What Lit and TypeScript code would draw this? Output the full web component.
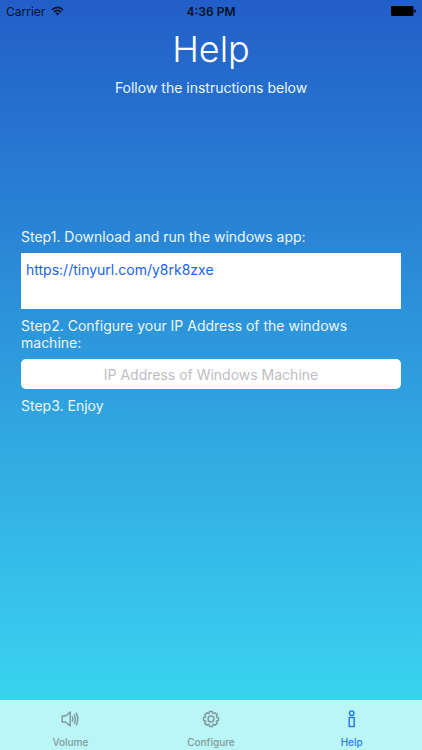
import { LitElement, html, css, svg } from "lit";
import { customElement, state } from "lit/decorators.js";
import { classMap } from "lit/directives/class-map.js";

const gearPath = (() => {
  const points: string[] = [];
  const teeth = 8;
  for (let i = 0; i < teeth; i++) {
    const base = (i / teeth) * Math.PI * 2 - Math.PI / 2;
    const corners: [number, number][] = [[-0.29, 6], [-0.2, 7.6], [0.2, 7.6], [0.29, 6]];
    for (const [offset, radius] of corners) {
      const x = 9 + radius * Math.cos(base + offset);
      const y = 9 + radius * Math.sin(base + offset);
      points.push(`${x.toFixed(2)} ${y.toFixed(2)}`);
    }
  }
  return `M${points.join("L")}Z`;
})();

const icons = {
  volume: svg`<path d="M1.2 6H4.6L9.2 2V16L4.6 12H1.2Z" />
    <path d="M11 6.4Q12.8 9 11 11.6M13 4.4Q15.8 9 13 13.6M15 2.6Q18.6 9 15 15.4" />`,
  configure: svg`<path d=${gearPath} /><circle cx="9" cy="9" r="2.9" />`,
  help: svg`<circle cx="8.7" cy="3.3" r="2.2" /><path d="M6.2 7.5H11.2V16.4H6.2Z" />`,
};

const tabs = [
  { id: "volume", label: "Volume", icon: icons.volume },
  { id: "configure", label: "Configure", icon: icons.configure },
  { id: "help", label: "Help", icon: icons.help },
];

@customElement("status-bar")
export class StatusBar extends LitElement {
  static styles = css`
    :host {
      display: grid;
      grid-template-columns: 1fr auto 1fr;
      align-items: center;
      height: 22px;
      padding: 0 6px;
      color: #061226;
      font-size: 12px;
    }
    .carrier {
      display: flex;
      align-items: center;
      gap: 6px;
    }
    .time {
      font-weight: 600;
    }
    .battery {
      justify-self: end;
    }
    svg {
      display: block;
    }
  `;

  render() {
    return html`
      <span class="carrier">
        Carrier
        <svg width="13" height="10" viewBox="0 0 14 10" fill="none" stroke="currentColor" stroke-width="1.8" aria-hidden="true">
          <path d="M1 3.8Q7 -1.8 13 3.8M3.2 6.2Q7 2.7 10.8 6.2" />
          <path d="M7 9.8L4.7 7.5Q7 5.6 9.3 7.5Z" fill="currentColor" stroke="none" />
        </svg>
      </span>
      <span class="time">4:36 PM</span>
      <svg class="battery" width="25" height="10" viewBox="0 0 25 10" fill="#000" aria-hidden="true">
        <rect width="22.5" height="10" rx="1.2" />
        <path d="M23.2 3.2Q25 3.6 25 5T23.2 6.8Z" />
      </svg>
    `;
  }
}

@customElement("tab-bar")
export class TabBar extends LitElement {
  @state() private selected = "help";

  static styles = css`
    :host {
      display: block;
      background: #bbf6f6;
    }
    .tabs {
      display: grid;
      grid-template-columns: repeat(3, 1fr);
    }
    .tab {
      display: flex;
      flex-direction: column;
      align-items: center;
      gap: 7px;
      height: 50px;
      padding: 10px 0 0;
      border: 0;
      background: none;
      color: #7d9b9c;
      font: 500 10px/14px Inter, sans-serif;
      cursor: pointer;
    }
    .selected {
      color: #2b7bf0;
    }
    svg {
      display: block;
      flex: none;
    }
  `;

  render() {
    return html`
      <nav class="tabs">
        ${tabs.map(
          (tab) => html`
            <button
              class=${classMap({ tab: true, selected: tab.id === this.selected })}
              @click=${() => (this.selected = tab.id)}
            >
              <svg width="18" height="18" viewBox="0 0 18 18" fill="none" stroke="currentColor" stroke-width="1.5" stroke-linejoin="round" aria-hidden="true">
                ${tab.icon}
              </svg>
              <span>${tab.label}</span>
            </button>
          `
        )}
      </nav>
    `;
  }
}

@customElement("app-root")
export class AppRoot extends LitElement {
  static styles = css`
    :host {
      display: flex;
      flex-direction: column;
      min-height: 100vh;
      background: linear-gradient(#225ec8, #3ad3f0 calc(100% - 50px));
      color: #e9f8ff;
      font-family: Inter, sans-serif;
      font-size: 14px;
      line-height: 17px;
    }
    .header {
      text-align: center;
    }
    .title {
      margin: 4px 0 6px;
      font-size: 36px;
      font-weight: 300;
      line-height: 47px;
      color: #ffffff;
    }
    .text {
      margin: 0;
    }
    .steps {
      flex: 1;
      display: flex;
      flex-direction: column;
      gap: 8px;
      padding: 132px 21px 0;
    }
    .download {
      box-sizing: border-box;
      height: 56px;
      padding: 8px 5px;
      background: #ffffff;
    }
    .link {
      color: #1a62ee;
      text-decoration: none;
    }
    .address {
      box-sizing: border-box;
      width: 100%;
      height: 30px;
      padding: 0 7px;
      border: 0;
      border-radius: 5px;
      background: #ffffff;
      color: #222222;
      font: inherit;
      text-align: center;
    }
    .address::placeholder {
      color: #bdbdc4;
      opacity: 1;
    }
  `;

  render() {
    return html`
      <status-bar></status-bar>
      <header class="header">
        <h1 class="title">Help</h1>
        <p class="text">Follow the instructions below</p>
      </header>
      <main class="steps">
        <p class="text">Step1. Download and run the windows app:</p>
        <div class="download">
          <a class="link" href="https://tinyurl.com/y8rk8zxe">https://tinyurl.com/y8rk8zxe</a>
        </div>
        <label class="text" for="address">Step2. Configure your IP Address of the windows machine:</label>
        <input class="address" id="address" type="text" placeholder="IP Address of Windows Machine" />
        <p class="text">Step3. Enjoy</p>
      </main>
      <tab-bar></tab-bar>
    `;
  }
}
